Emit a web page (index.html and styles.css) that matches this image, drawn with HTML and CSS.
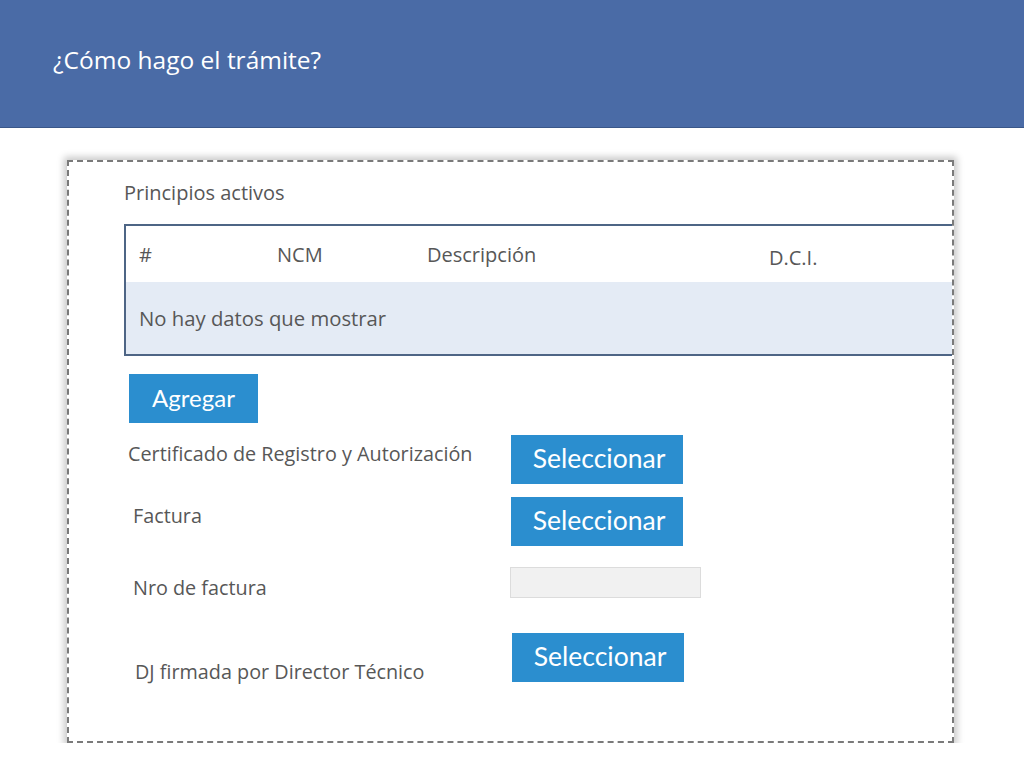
FILE: index.html
```html
<!DOCTYPE html>
<html lang="es">
<head>
<meta charset="utf-8">
<title>¿Cómo hago el trámite?</title>
<link rel="stylesheet" href="styles.css">
</head>
<body>
<header class="banner">
  <h1 class="banner-title">¿Cómo hago el trámite?</h1>
</header>
<main class="stage">
  <section class="card">
    <h2 class="section-title">Principios activos</h2>
    <div class="table">
      <div class="thead">
        <span class="col col-num">#</span>
        <span class="col col-ncm">NCM</span>
        <span class="col col-desc">Descripción</span>
        <span class="col col-dci">D.C.I.</span>
      </div>
      <div class="tbody">No hay datos que mostrar</div>
    </div>
    <button class="btn btn-add">Agregar</button>
    <div class="form">
      <div class="row row-1">
        <span class="label label-first">Certificado de Registro y Autorización</span>
        <button class="btn btn-select">Seleccionar</button>
      </div>
      <div class="row row-2">
        <span class="label">Factura</span>
        <button class="btn btn-select">Seleccionar</button>
      </div>
      <div class="row row-3">
        <span class="label label-input">Nro de factura</span>
        <input class="field" type="text">
      </div>
      <div class="row row-4">
        <span class="label label-low">DJ firmada por Director Técnico</span>
        <button class="btn btn-select btn-last">Seleccionar</button>
      </div>
    </div>
  </section>
</main>
</body>
</html>
```

FILE: styles.css
```css
* { box-sizing: border-box; }

html, body {
  margin: 0;
  padding: 0;
  background: #ffffff;
}

body {
  font-family: "Open Sans", "Liberation Sans", sans-serif;
  color: #575757;
}

.banner {
  height: 128px;
  background: #4a6ba6;
  border-bottom: 1px solid #3a5789;
  display: flex;
  align-items: flex-start;
}

.banner-title {
  margin: 44px 0 0 53px;
  font-family: "Open Sans", "DejaVu Sans", sans-serif;
  font-weight: 400;
  font-size: 24.5px;
  line-height: 32px;
  color: #ffffff;
}

.stage {
  padding: 32px 0 0 67px;
}

.card {
  width: 887px;
  height: 583px;
  border: 2px dashed #7a7a7a;
  box-shadow: 0 0 7px 3px rgba(0, 0, 0, 0.22);
  overflow: hidden;
  padding: 20px 0 0 55px;
  background: #ffffff;
}

.section-title {
  margin: 0;
  font-weight: 400;
  font-size: 20px;
  line-height: 22px;
  color: #575757;
}

.table {
  margin-top: 20px;
  width: 900px;
  border: 2px solid #4e6585;
}

.thead {
  height: 56px;
  display: flex;
  align-items: center;
  padding-left: 13px;
  font-size: 20px;
  background: #ffffff;
}

.col { display: block; }
.col-num { width: 138px; }
.col-ncm { width: 150px; }
.col-desc { width: 342px; }
.col-dci { padding-top: 7px; }

.tbody {
  height: 72px;
  display: flex;
  align-items: center;
  padding-left: 13px;
  font-size: 20.3px;
  background: #e4ebf5;
}

.btn {
  border: none;
  background: #2b8ecf;
  color: #ffffff;
  font-family: "Lato", "Liberation Sans", sans-serif;
  padding: 0 0 3px;
  display: flex;
  align-items: center;
  justify-content: center;
}

.btn-add {
  margin: 18px 0 0 5px;
  width: 129px;
  height: 49px;
  font-size: 24px;
}

.form {
  margin-top: 12px;
  display: flex;
  flex-direction: column;
}

.row {
  display: flex;
  align-items: flex-start;
}

.row-2 { margin-top: 13px; }
.row-3 { margin-top: 21px; }
.row-4 { margin-top: 34px; }

.label {
  width: 387px;
  font-size: 19.8px;
  line-height: 22px;
  padding: 8px 0 0 9px;
}

.label-first { padding: 8px 0 0 4px; }
.label-input { padding-top: 10px; }
.label-low { padding: 28px 0 0 11px; }

.btn-select {
  width: 172px;
  height: 49px;
  font-size: 26.5px;
  padding-left: 4px;
}

.btn-last { margin-left: 1px; }

.field {
  width: 191px;
  height: 31px;
  margin-left: -1px;
  border: 1px solid #dcdcdc;
  background: #f1f1f1;
}
```
